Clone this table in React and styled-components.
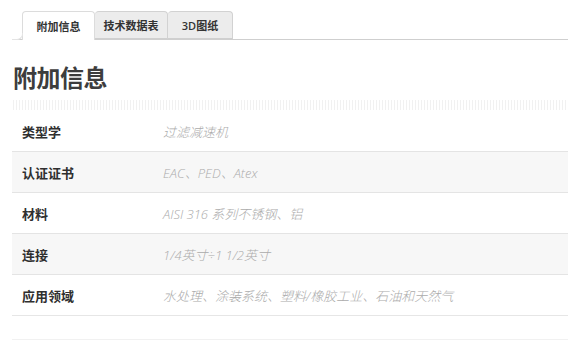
import React from "react";
import styled, { createGlobalStyle } from "styled-components";

const Global = createGlobalStyle`
  html, body { margin: 0; padding: 0; background: #fff; }
  body { font-family: "Open Sans", "Noto Sans CJK SC", sans-serif; color: #333; }
`;

const Page = styled.div`
  padding: 11px 0 0 12px;
  overflow: hidden;
`;

const TabBar = styled.div`
  display: flex;
  align-items: flex-end;
  height: 28px;
  padding-left: 10px;
  border-bottom: 1px solid #cfcfcf;
  position: relative;
  &::before {
    content: "";
    position: absolute;
    left: 0;
    bottom: -1px;
    width: 10px;
    height: 6px;
    border-bottom: 1px solid #e4e4e4;
    border-right: 1px solid #e4e4e4;
    border-bottom-right-radius: 6px;
    background: #fff;
  }
`;

const Tab = styled.div`
  box-sizing: border-box;
  width: ${(p) => p.$w}px;
  height: ${(p) => (p.$active ? 29 : 28)}px;
  margin-bottom: ${(p) => (p.$active ? -1 : 0)}px;
  display: flex;
  align-items: center;
  justify-content: center;
  padding-bottom: 1px;
  font-size: 11px;
  font-weight: 600;
  color: #333;
  background: ${(p) => (p.$active ? "#fff" : "#ececec")};
  border: 1px solid ${(p) => (p.$active ? "#dcdcdc" : "#d2d2d2")};
  border-bottom: ${(p) => (p.$active ? "none" : "1px solid #cfcfcf")};
  border-left: ${(p) => (p.$first ? undefined : p.$active ? undefined : "none")};
  border-radius: 4px 4px 0 0;
`;

const Heading = styled.h2`
  margin: 22px 0 0 1px;
  font-size: 24px;
  line-height: 32px;
  font-weight: 700;
  color: #3d3d3d;
  letter-spacing: -0.5px;
`;

/* faint dotted divider under the heading */
const Dots = styled.div`
  height: 10px;
  margin-top: 6px;
  background-image: radial-gradient(circle, #f1f1f1 0.5px, transparent 0.8px);
  background-size: 3px 2px;
`;

const Table = styled.div`
  margin-top: 1px;
  border-bottom: 1px solid #e6e6e6;
`;

const Row = styled.div`
  display: grid;
  grid-template-columns: 141px 1fr;
  align-items: center;
  height: 40px;
  padding-left: 10px;
  background: ${(p) => (p.$shade ? "#f7f7f7" : "#fff")};
  & + & { border-top: 1px solid #e4e4e4; }
`;

const Label = styled.div`
  font-size: 13px;
  font-weight: 700;
  color: #2f2f2f;
`;

const Value = styled.div`
  font-size: 13px;
  font-weight: 300;
  font-style: italic;
  color: #ababab;
  white-space: nowrap;
`;

const Footer = styled.div`
  height: 23px;
  border-bottom: 1px solid #f1f1f1;
`;

const rows = [
  ["类型学", "过滤减速机"],
  ["认证证书", "EAC、PED、Atex"],
  ["材料", "AISI 316 系列不锈钢、铝"],
  ["连接", "1/4英寸÷1 1/2英寸"],
  ["应用领域", "水处理、涂装系统、塑料/橡胶工业、石油和天然气"],
];

export default function App() {
  return (
    <Page>
      <Global />
      <TabBar>
        <Tab $active $first $w={73}>附加信息</Tab>
        <Tab $w={73}>技术数据表</Tab>
        <Tab $w={65}>3D图纸</Tab>
      </TabBar>
      <Heading>附加信息</Heading>
      <Dots />
      <Table>
        {rows.map(([k, v], i) => (
          <Row key={k} $shade={i % 2 === 1}>
            <Label>{k}</Label>
            <Value>{v}</Value>
          </Row>
        ))}
      </Table>
      <Footer />
    </Page>
  );
}
